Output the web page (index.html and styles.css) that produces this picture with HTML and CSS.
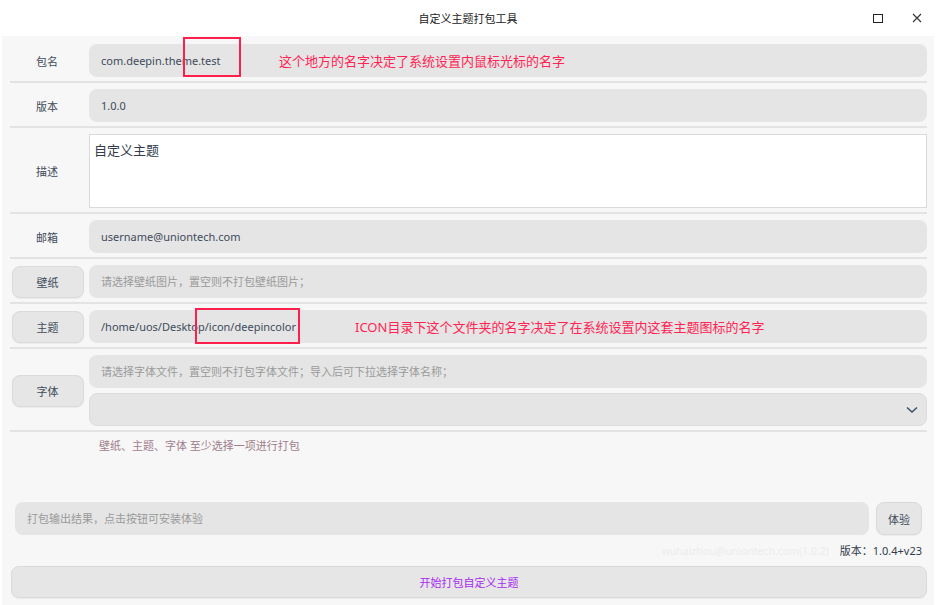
FILE: index.html
```html
<!DOCTYPE html>
<html lang="zh-CN">
<head>
    <meta charset="UTF-8">
    <title>自定义主题打包工具</title>
    <link rel="stylesheet" href="styles.css">
</head>
<body>

<div class="window">
    <div class="titlebar">
        <span class="title">自定义主题打包工具</span>
        <div class="win-buttons">
            <span class="win-max"></span>
            <svg class="win-close" width="10" height="10" viewBox="0 0 10 10">
                <path d="M1 1 L9 9 M9 1 L1 9" stroke="#333" stroke-width="1.1" fill="none"/>
            </svg>
        </div>
    </div>

    <div class="content">
        <!-- 基本信息 -->
        <div class="row">
            <div class="label">包名</div>
            <div class="field">com.deepin.theme.test</div>
        </div>
        <div class="row">
            <div class="label">版本</div>
            <div class="field">1.0.0</div>
        </div>
        <div class="row">
            <div class="label">描述</div>
            <div class="textarea">自定义主题</div>
        </div>
        <div class="row">
            <div class="label">邮箱</div>
            <div class="field">username@uniontech.com</div>
        </div>

        <!-- 资源选择 -->
        <div class="row">
            <div class="label"><button class="btn">壁纸</button></div>
            <div class="field placeholder">请选择壁纸图片，置空则不打包壁纸图片；</div>
        </div>
        <div class="row">
            <div class="label"><button class="btn">主题</button></div>
            <div class="field">/home/uos/Desktop/icon/deepincolor</div>
        </div>
        <div class="row">
            <div class="label"><button class="btn">字体</button></div>
            <div class="stack">
                <div class="field placeholder">请选择字体文件，置空则不打包字体文件；导入后可下拉选择字体名称；</div>
                <div class="combo">
                    <svg width="12" height="8" viewBox="0 0 12 8">
                        <path d="M1 1.5 L6 6 L11 1.5" stroke="#3c4a63" stroke-width="1.4" fill="none"/>
                    </svg>
                </div>
            </div>
        </div>

        <div class="hint">壁纸、主题、字体 至少选择一项进行打包</div>

        <div class="output-row">
            <div class="field placeholder">打包输出结果，点击按钮可安装体验</div>
            <button class="btn small">体验</button>
        </div>

        <div class="version">
            <span class="author">wuhaizhou@uniontech.com(1.0.2)</span>
            <span>版本：1.0.4+v23</span>
        </div>

        <button class="btn big">开始打包自定义主题</button>
    </div>

    <!-- 标注 -->
    <div class="mark mark-name"></div>
    <div class="note note-name">这个地方的名字决定了系统设置内鼠标光标的名字</div>
    <div class="mark mark-icon"></div>
    <div class="note note-icon">ICON目录下这个文件夹的名字决定了在系统设置内这套主题图标的名字</div>
</div>

</body>
</html>
```

FILE: styles.css
```css
/* General Styles */
body {
    margin: 0;
    padding: 0;
    font-family: "Noto Sans", "Noto Sans CJK SC", sans-serif;
    font-size: 11px;
    color: #414b5a;
    background-color: #ffffff;
}
.window {
    position: relative;
    width: 936px;
    height: 605px;
    overflow: hidden;
}
.titlebar {
    height: 36px;
    display: flex;
    align-items: center;
    justify-content: center;
    position: relative;
    background-color: #ffffff;
}
.title {
    font-size: 11px;
    color: #222;
}
.win-buttons {
    position: absolute;
    right: 14px;
    top: 0;
    height: 36px;
    display: flex;
    align-items: center;
    gap: 29px;
}
.win-max {
    width: 8px;
    height: 7px;
    border: 1.3px solid #222;
}
.content {
    background-color: #f7f7f7;
    margin: 0 2px;
    padding: 2px 7px 7px 8px;
    height: 560px;
    display: flex;
    flex-direction: column;
}
.row {
    display: flex;
    align-items: center;
    padding: 6px 0 4px;
    border-bottom: 2px solid #e3e3e3;
}
.label {
    width: 79px;
    flex-shrink: 0;
    text-align: center;
    color: #414b5a;
    padding-right: 5px;
    box-sizing: border-box;
}
.field {
    flex: 1;
    height: 33px;
    line-height: 33px;
    background-color: #e5e5e5;
    border-radius: 8px;
    padding: 0 12px;
    box-sizing: border-box;
    font-size: 11px;
    color: #414b5a;
    white-space: nowrap;
    overflow: hidden;
}
.placeholder {
    color: #9a9a9a;
    font-size: 11px;
}
.textarea {
    flex: 1;
    height: 74px;
    background-color: #ffffff;
    border: 1px solid #dadada;
    box-sizing: border-box;
    padding: 5px 4px;
    font-size: 13px;
    color: #333c4c;
}
.stack {
    flex: 1;
    display: flex;
    flex-direction: column;
    gap: 5px;
}
.combo {
    height: 33px;
    background-color: #e5e5e5;
    border: 1px solid #dcdcdc;
    border-radius: 8px;
    box-sizing: border-box;
    display: flex;
    align-items: center;
    justify-content: flex-end;
    padding-right: 8px;
}
.btn {
    font-family: "Noto Sans", "Noto Sans CJK SC", sans-serif;
    font-size: 11px;
    color: #414b5a;
    background-color: #e6e6e6;
    border: 1px solid #dadada;
    border-radius: 8px;
    width: 72px;
    height: 32px;
    margin-left: 1px;
    box-shadow: 0 1px 1px rgba(0, 0, 0, 0.05);
}
.hint {
    margin: 6px 0 0 89px;
    color: #a07d8c;
    height: 16px;
    line-height: 16px;
}
.output-row {
    display: flex;
    align-items: center;
    gap: 7px;
    margin: 48px 5px 0 5px;
}
.btn.small {
    width: 46px;
    height: 33px;
    margin: 0;
}
.version {
    text-align: right;
    margin: 8px 5px 0 0;
    height: 16px;
    line-height: 16px;
    color: #333c4c;
}
.author {
    color: #ececec;
    font-size: 10.5px;
    margin-right: 8px;
}
.btn.big {
    width: auto;
    height: 33px;
    margin: 7px 0 0 1px;
    color: #a72bf0;
}

/* 标注 */
.mark {
    position: absolute;
    border: 2px solid #ff1f4c;
    box-sizing: border-box;
}
.mark-name {
    left: 183px;
    top: 37px;
    width: 58px;
    height: 40px;
}
.mark-icon {
    left: 195px;
    top: 308px;
    width: 105px;
    height: 36px;
}
.note {
    position: absolute;
    color: #ff2454;
    font-size: 13px;
    white-space: nowrap;
}
.note-name {
    left: 279px;
    top: 51px;
}
.note-icon {
    left: 355px;
    top: 317px;
}
```
